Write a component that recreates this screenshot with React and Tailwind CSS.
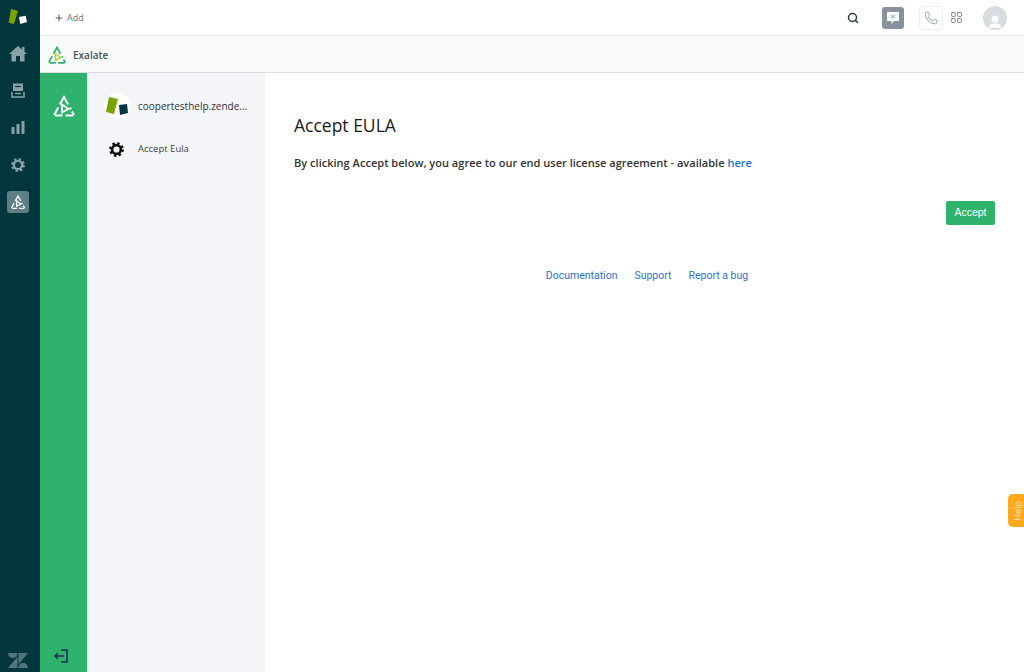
import React from 'react';
import { Plus, Search, Phone, LayoutGrid } from 'lucide-react';

const ZendeskMark = () => (
    <svg width="24" height="20" viewBox="0 0 24 20">
        <polygon points="3,1 10,3 6,16 0.7,14.7" fill="#78a300" />
        <polygon points="11,9 17.7,7.7 19,14 12.3,16" fill="#ffffff" />
    </svg>
);

const AccountLogo = () => (
    <svg width="26" height="26" viewBox="0 0 26 26">
        <circle cx="13" cy="13" r="13" fill="#fff" />
        <polygon points="5,4 14,6 10,21 2,19" fill="#78a300" />
        <polygon points="15,12 23,11 24,20 16,22" fill="#03363d" />
    </svg>
);

// triangle made of broken strokes with a play shape inside
const ExalateMark = ({ color = '#fff', accent = '#fff', size = 24 }) => (
    <svg width={size} height={size} viewBox="0 0 24 24" fill="none" stroke={color} strokeWidth="2">
        <path d="M7.8 10.5 L12 3 L16.2 10.5" />
        <path d="M18 13.5 L18.9 15.2 M20 17.5 L22 21.3" />
        <path d="M21 21.5 H13.5 M10.5 21.5 H3" />
        <path d="M6.2 13.5 L2.2 21" />
        <path d="M10 10.5 L16.5 15 L10 18.5 Z" stroke={accent} strokeWidth="1.8" />
    </svg>
);

const Gear = ({ size = 14, color = '#111' }) => (
    <svg width={size} height={size} viewBox="0 0 14 14" fill="none" stroke={color}>
        <circle cx="7" cy="7" r="4.1" strokeWidth="2.4" />
        <circle cx="7" cy="7" r="5.8" strokeWidth="2.2" strokeDasharray="2.3 2.25" />
    </svg>
);

const HomeIcon = () => (
    <svg width="18" height="16" viewBox="0 0 18 16" fill="#87a3a7">
        <path d="M0 8 L9 0 L13 3.5 V1 H15.5 V5.8 L18 8 H15.5 V15.5 H11 V10 H7 V15.5 H2.5 V8 Z" />
    </svg>
);

const TicketsIcon = () => (
    <svg width="14" height="15" viewBox="0 0 14 15" fill="none">
        <path d="M2 0.5 H12 V8 H2 Z" fill="#87a3a7" />
        <path d="M4 3.5 H10" stroke="#03363d" strokeWidth="1.2" />
        <path d="M1 9 V14 H13 V9" stroke="#87a3a7" strokeWidth="1.6" />
        <path d="M4 10.5 H10" stroke="#87a3a7" strokeWidth="1.4" />
    </svg>
);

const ChartIcon = () => (
    <svg width="14" height="13" viewBox="0 0 14 13" fill="#87a3a7">
        <rect x="0.5" y="6" width="3" height="7" />
        <rect x="5.5" y="3" width="3" height="10" />
        <rect x="10.5" y="0" width="3" height="13" />
    </svg>
);

const ZendeskZ = () => (
    <svg width="20" height="15" viewBox="0 0 20 15" fill="#4f767b">
        <path d="M0 0 H9.5 C9.5 3 7.5 5 4.7 5 C2 5 0 3 0 0 Z" />
        <path d="M0 15 L9.5 3.5 V15 Z" />
        <path d="M10.5 0 H20 L10.5 11.5 Z" />
        <path d="M10.5 15 C10.5 12 12.5 10 15.2 10 C18 10 20 12 20 15 Z" />
    </svg>
);

const App = () => {
    return (
        <div className="relative flex h-[672px] w-[1024px] overflow-hidden bg-white font-['Open_Sans',sans-serif]">
            {/* Product rail */}
            <aside className="flex w-10 shrink-0 flex-col items-center bg-[#03363d] pr-[4px]">
                <div className="mt-[8px] h-5 translate-x-[2px]">
                    <ZendeskMark />
                </div>
                <div className="mt-[18px] flex flex-col items-center">
                    <HomeIcon />
                    <div className="mt-[21px] h-[15px]"><TicketsIcon /></div>
                    <div className="mt-[23px] h-[13px]"><ChartIcon /></div>
                    <div className="mt-[24px] h-[14px]"><Gear color="#87a3a7" /></div>
                    <div className="mt-[19px] flex h-[22px] w-[22px] items-center justify-center rounded-[3px] bg-[#5c8085]">
                        <ExalateMark size={16} />
                    </div>
                </div>
                <div className="mt-auto mb-[4px] h-[15px]">
                    <ZendeskZ />
                </div>
            </aside>

            <div className="flex min-w-0 flex-1 flex-col">
                {/* Top bar */}
                <header className="flex h-9 shrink-0 items-center border-b border-[#e9ebed] bg-white">
                    <div className="ml-[14px] flex items-center gap-[3px] pt-[1px] text-[9px] text-[#68737d]">
                        <Plus size={10} stroke="#2f3941" strokeWidth={2} />
                        <span>Add</span>
                    </div>
                    <div className="ml-auto flex items-center">
                        <Search size={12} stroke="#2f3941" strokeWidth={3} />
                        <div className="ml-[23px] flex h-[22px] w-[22px] items-center justify-center rounded-[3px] bg-[#87929d]">
                            <svg width="14" height="14" viewBox="0 0 14 14">
                                <path d="M1 1 H13 V10 H8 L5.5 13 V10 H1 Z" fill="#fff" />
                                <path d="M5 3.5 L9 7.5 M9 3.5 L5 7.5" stroke="#87929d" strokeWidth="1" />
                            </svg>
                        </div>
                        <div className="ml-[15px] flex h-6 w-6 items-center justify-center rounded-[4px] border border-[#eceef0]">
                            <Phone size={14} stroke="#87929d" strokeWidth={1.4} />
                        </div>
                        <LayoutGrid size={13} stroke="#68737d" strokeWidth={1.5} className="ml-[7px]" />
                        <div className="mr-[17px] ml-[20px] flex h-6 w-6 items-end justify-center overflow-hidden rounded-full bg-[#d8dcde]">
                            <svg width="14" height="16" viewBox="0 0 14 16" fill="#fff">
                                <circle cx="7" cy="5" r="3.5" />
                                <path d="M1 14 C1 10 4 9.5 7 9.5 C10 9.5 13 10 13 14 Z" />
                            </svg>
                        </div>
                    </div>
                </header>

                {/* App title bar */}
                <div className="flex h-[37px] shrink-0 items-center border-b border-[#d8dcde] bg-[#f8f9f9] pt-[2px] pl-[7px]">
                    <ExalateMark size={20} color="#2eb26c" accent="#b5d334" />
                    <span className="ml-[6px] text-[10px] font-semibold text-[#49545c]">Exalate</span>
                </div>

                <div className="flex min-h-0 flex-1">
                    {/* Green connector rail */}
                    <div className="flex w-[47px] shrink-0 flex-col items-center bg-[#2eb26c]">
                        <div className="mt-[21px]"><ExalateMark size={24} /></div>
                        <svg className="mt-auto mr-[5px] mb-[8px]" width="16" height="16" viewBox="0 0 16 16" fill="none" stroke="#1f2a5c" strokeWidth="1.5">
                            <path d="M8 2 H14 V14 H8" />
                            <path d="M11 8 H2 M5 5 L2 8 L5 11" />
                        </svg>
                    </div>

                    {/* Side nav */}
                    <nav className="w-[178px] shrink-0 bg-[#f4f5f8] pt-[20px]">
                        <div className="flex items-center pl-[17px]">
                            <AccountLogo />
                            <span className="ml-[8px] w-[110px] truncate text-[10px] font-medium text-[#333]">coopertesthelp.zendesk.com</span>
                        </div>
                        <div className="mt-[23px] flex items-center pl-[22px]">
                            <Gear size={15} />
                            <span className="ml-[14px] text-[9.5px] text-[#444]">Accept Eula</span>
                        </div>
                    </nav>

                    {/* Main content */}
                    <main className="min-w-0 flex-1 px-[29px] pt-[40px]">
                        <h1 className="text-[17.5px] leading-6 font-medium text-[#1a1a1a]">Accept EULA</h1>
                        <p className="mt-[18px] text-[11.05px] leading-4 font-semibold text-[#333]">
                            By clicking Accept below, you agree to our end user license agreement - available <a className="text-[#1a6fd8]">here</a>
                        </p>
                        <div className="mt-[30px] flex justify-end">
                            <button className="h-6 w-[49px] rounded-[2px] bg-[#2eb26c] font-['Liberation_Sans',sans-serif] text-[10.5px] text-white">Accept</button>
                        </div>
                        <div className="mt-[43px] flex justify-center gap-[17px] pl-[5px] font-['Roboto',sans-serif] text-[10.5px] text-[#2f6fd0]">
                            <a>Documentation</a>
                            <a>Support</a>
                            <a>Report a bug</a>
                        </div>
                    </main>
                </div>
            </div>

            {/* Help tab */}
            <div className="absolute top-[494px] right-0 flex h-[33px] w-4 items-center justify-center rounded-l-[5px] bg-[#ffa91f] pl-[3px]">
                <span className="-rotate-90 text-[9px] text-[#ffe3b0]">Help</span>
            </div>
        </div>
    );
};

export default App;
